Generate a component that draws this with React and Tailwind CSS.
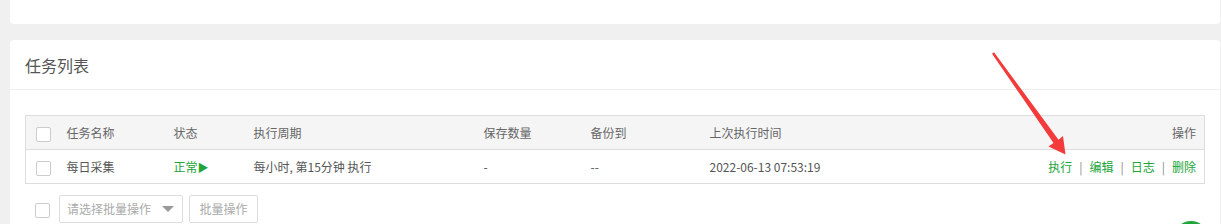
import React from 'react';

const font = { fontFamily: '"Noto Sans CJK SC", "Liberation Sans", sans-serif' };

const Checkbox = () => (
  <span className="inline-block w-[15px] h-[15px] border border-[#ccc] rounded-[2px] bg-white align-middle" />
);

const columns = [
  { key: 'check', label: null, className: 'w-[31px] pl-[10px]' },
  { key: 'name', label: '任务名称', className: 'w-[107px] pl-[10px]' },
  { key: 'status', label: '状态', className: 'w-[80px] pl-[10px]' },
  { key: 'cycle', label: '执行周期', className: 'w-[230px] pl-[10px]' },
  { key: 'save', label: '保存数量', className: 'w-[107px] pl-[10px]' },
  { key: 'backup', label: '备份到', className: 'w-[119px] pl-[10px]' },
  { key: 'last', label: '上次执行时间', className: 'w-[250px] pl-[10px]' },
  { key: 'ops', label: '操作', className: 'text-right pr-[8px]' },
];

const OpLink = ({ children }) => (
  <span className="text-[#20a53a] cursor-pointer">{children}</span>
);

const Sep = () => <span className="text-[#888] mx-[7px]">|</span>;

export default function App() {
  return (
    <div className="relative h-[224px] overflow-hidden bg-[#f0f0f0] pl-[10px] pr-[1px]" style={font}>
      {/* top card (tail end) */}
      <div className="h-[24px] bg-white rounded-b-[4px]" />

      {/* task list card */}
      <div className="mt-[16px] bg-white rounded-t-[4px] h-[200px]">
        <div className="h-[50px] border-b border-[#eee] pl-[15px] flex items-center text-[16px] text-[#555]">
          任务列表
        </div>

        <div className="px-[15px] pt-[25px]">
          <table className="w-full table-fixed border-collapse border border-[#ddd] text-[12px]">
            <thead>
              <tr className="h-[34px] bg-[#f5f5f5] text-[#666]">
                {columns.map((c) => (
                  <th key={c.key} className={`font-normal text-left ${c.className}`}>
                    {c.key === 'check' ? <Checkbox /> : c.label}
                  </th>
                ))}
              </tr>
            </thead>
            <tbody>
              <tr className="h-[34px] border-t border-[#ddd] text-[#555]">
                <td className="pl-[10px]"><Checkbox /></td>
                <td className="pl-[10px]">每日采集</td>
                <td className="pl-[10px] text-[#20a53a]">正常<span className="text-[11px]">▶</span></td>
                <td className="pl-[10px]">每小时, 第15分钟 执行</td>
                <td className="pl-[10px]">-</td>
                <td className="pl-[10px]">--</td>
                <td className="pl-[10px]">2022-06-13 07:53:19</td>
                <td className="text-right pr-[8px]">
                  <OpLink>执行</OpLink><Sep />
                  <OpLink>编辑</OpLink><Sep />
                  <OpLink>日志</OpLink><Sep />
                  <OpLink>删除</OpLink>
                </td>
              </tr>
            </tbody>
          </table>

          <div className="flex items-center mt-[11px] text-[12px]">
            <span className="ml-[10px]"><Checkbox /></span>
            <div className="ml-[9px] w-[124px] h-[28px] border border-[#ddd] rounded-[2px] flex items-center justify-between pl-[7px] pr-[8px] text-[#aaa]">
              <span>请选择批量操作</span>
              <span className="w-0 h-0 border-l-[6px] border-r-[6px] border-t-[6px] border-l-transparent border-r-transparent border-t-[#999]" />
            </div>
            <button className="ml-[6px] w-[69px] h-[28px] border border-[#ddd] rounded-[2px] bg-white text-[#aaa]">
              批量操作
            </button>
          </div>
        </div>
      </div>

      {/* floating green button, partially visible */}
      <div className="absolute left-[1174px] top-[221px] w-[34px] h-[34px] rounded-full bg-[#20a53a] shadow-[0_0_8px_4px_rgba(255,255,255,0.9)]" />

      {/* red annotation arrow */}
      <svg className="absolute inset-0 pointer-events-none" width="1221" height="224" viewBox="0 0 1221 224">
        <polygon
          points="994,52.3 1058.5,139.8 1063,136 1065.5,154.5 1048.5,146.5 1053.5,143 992,53.7"
          fill="#f43b3b"
        />
      </svg>
    </div>
  );
}
